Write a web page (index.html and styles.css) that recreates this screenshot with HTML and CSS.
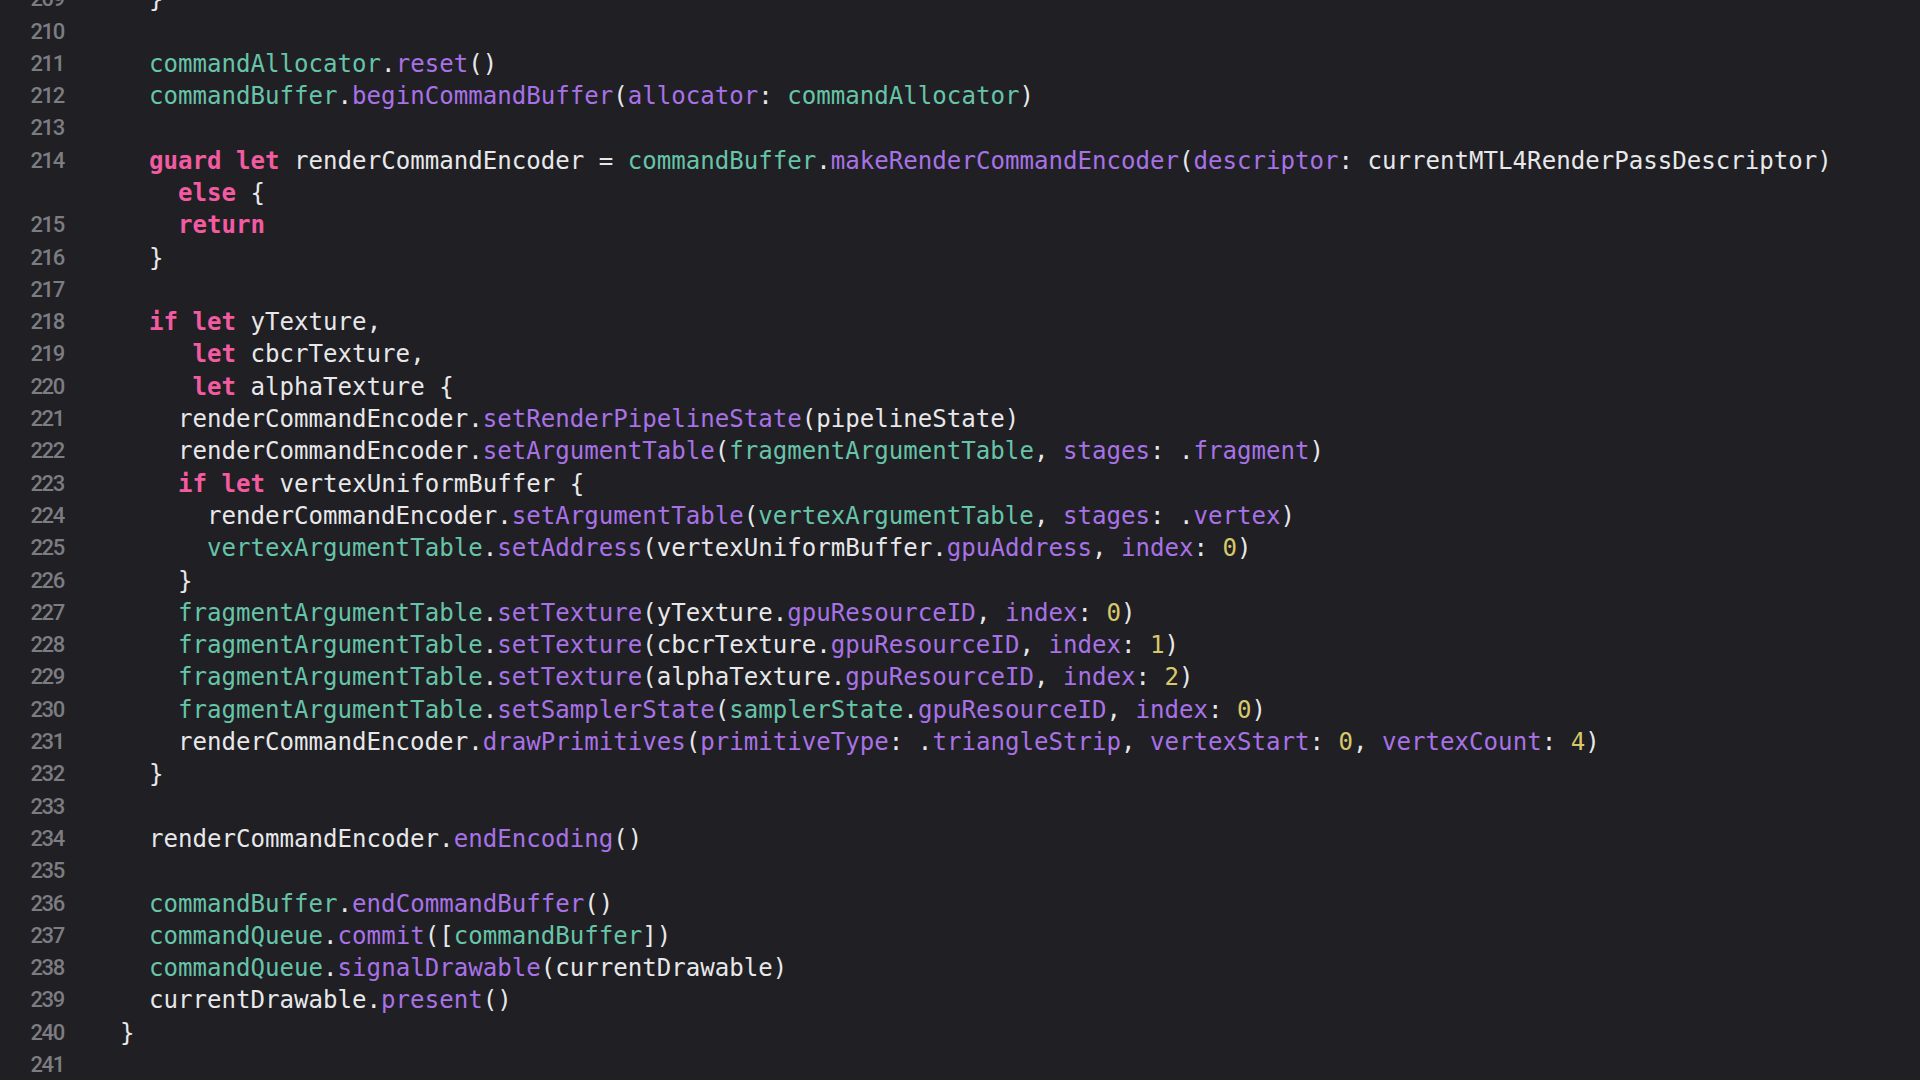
FILE: index.html
```html
<!DOCTYPE html>
<html>
<head>
<meta name="viewport" content="width=device-width, initial-scale=1">
<title>Renderer.swift</title>
<link rel="stylesheet" href="styles.css">
</head>
<body>
<!-- Source editor -->
<div class="editor">
   <div class="line"><span class="num">209</span><span class="code">  }</span></div>
   <div class="line"><span class="num">210</span><span class="code"></span></div>
   <div class="line"><span class="num">211</span><span class="code">  <span class="pj">commandAllocator</span>.<span class="fn">reset</span>()</span></div>
   <div class="line"><span class="num">212</span><span class="code">  <span class="pj">commandBuffer</span>.<span class="fn">beginCommandBuffer</span>(<span class="fn">allocator</span>: <span class="pj">commandAllocator</span>)</span></div>
   <div class="line"><span class="num">213</span><span class="code"></span></div>
   <div class="line"><span class="num">214</span><span class="code">  <span class="kw">guard</span> <span class="kw">let</span> renderCommandEncoder = <span class="pj">commandBuffer</span>.<span class="fn">makeRenderCommandEncoder</span>(<span class="fn">descriptor</span>: currentMTL4RenderPassDescriptor)</span></div>
   <div class="line"><span class="num"></span><span class="code">    <span class="kw">else</span> {</span></div>
   <div class="line"><span class="num">215</span><span class="code">    <span class="kw">return</span></span></div>
   <div class="line"><span class="num">216</span><span class="code">  }</span></div>
   <div class="line"><span class="num">217</span><span class="code"></span></div>
   <div class="line"><span class="num">218</span><span class="code">  <span class="kw">if</span> <span class="kw">let</span> yTexture,</span></div>
   <div class="line"><span class="num">219</span><span class="code">     <span class="kw">let</span> cbcrTexture,</span></div>
   <div class="line"><span class="num">220</span><span class="code">     <span class="kw">let</span> alphaTexture {</span></div>
   <div class="line"><span class="num">221</span><span class="code">    renderCommandEncoder.<span class="fn">setRenderPipelineState</span>(pipelineState)</span></div>
   <div class="line"><span class="num">222</span><span class="code">    renderCommandEncoder.<span class="fn">setArgumentTable</span>(<span class="pj">fragmentArgumentTable</span>, <span class="fn">stages</span>: .<span class="fn">fragment</span>)</span></div>
   <div class="line"><span class="num">223</span><span class="code">    <span class="kw">if</span> <span class="kw">let</span> vertexUniformBuffer {</span></div>
   <div class="line"><span class="num">224</span><span class="code">      renderCommandEncoder.<span class="fn">setArgumentTable</span>(<span class="pj">vertexArgumentTable</span>, <span class="fn">stages</span>: .<span class="fn">vertex</span>)</span></div>
   <div class="line"><span class="num">225</span><span class="code">      <span class="pj">vertexArgumentTable</span>.<span class="fn">setAddress</span>(vertexUniformBuffer.<span class="fn">gpuAddress</span>, <span class="fn">index</span>: <span class="nm">0</span>)</span></div>
   <div class="line"><span class="num">226</span><span class="code">    }</span></div>
   <div class="line"><span class="num">227</span><span class="code">    <span class="pj">fragmentArgumentTable</span>.<span class="fn">setTexture</span>(yTexture.<span class="fn">gpuResourceID</span>, <span class="fn">index</span>: <span class="nm">0</span>)</span></div>
   <div class="line"><span class="num">228</span><span class="code">    <span class="pj">fragmentArgumentTable</span>.<span class="fn">setTexture</span>(cbcrTexture.<span class="fn">gpuResourceID</span>, <span class="fn">index</span>: <span class="nm">1</span>)</span></div>
   <div class="line"><span class="num">229</span><span class="code">    <span class="pj">fragmentArgumentTable</span>.<span class="fn">setTexture</span>(alphaTexture.<span class="fn">gpuResourceID</span>, <span class="fn">index</span>: <span class="nm">2</span>)</span></div>
   <div class="line"><span class="num">230</span><span class="code">    <span class="pj">fragmentArgumentTable</span>.<span class="fn">setSamplerState</span>(<span class="pj">samplerState</span>.<span class="fn">gpuResourceID</span>, <span class="fn">index</span>: <span class="nm">0</span>)</span></div>
   <div class="line"><span class="num">231</span><span class="code">    renderCommandEncoder.<span class="fn">drawPrimitives</span>(<span class="fn">primitiveType</span>: .<span class="fn">triangleStrip</span>, <span class="fn">vertexStart</span>: <span class="nm">0</span>, <span class="fn">vertexCount</span>: <span class="nm">4</span>)</span></div>
   <div class="line"><span class="num">232</span><span class="code">  }</span></div>
   <div class="line"><span class="num">233</span><span class="code"></span></div>
   <div class="line"><span class="num">234</span><span class="code">  renderCommandEncoder.<span class="fn">endEncoding</span>()</span></div>
   <div class="line"><span class="num">235</span><span class="code"></span></div>
   <div class="line"><span class="num">236</span><span class="code">  <span class="pj">commandBuffer</span>.<span class="fn">endCommandBuffer</span>()</span></div>
   <div class="line"><span class="num">237</span><span class="code">  <span class="pj">commandQueue</span>.<span class="fn">commit</span>([<span class="pj">commandBuffer</span>])</span></div>
   <div class="line"><span class="num">238</span><span class="code">  <span class="pj">commandQueue</span>.<span class="fn">signalDrawable</span>(currentDrawable)</span></div>
   <div class="line"><span class="num">239</span><span class="code">  currentDrawable.<span class="fn">present</span>()</span></div>
   <div class="line"><span class="num">240</span><span class="code">}</span></div>
   <div class="line"><span class="num">241</span><span class="code"></span></div>
</div>
</body>
</html>
```

FILE: styles.css
```css
html,
body {
   margin: 0;
   padding: 0;
   height: 100%;
   overflow: hidden;
   background: #1f1f24;
}

.editor {
   margin-top: -16.8px;
}

.line {
   display: grid;
   grid-template-columns: 64px 1fr;
   column-gap: 56px;
   height: 32.3px;
   line-height: 32.3px;
}

.num {
   font-family: Roboto, "Liberation Sans", sans-serif;
   font-size: 22px;
   font-weight: 500;
   letter-spacing: -1.3px;
   color: #7c7c81;
   text-align: right;
}

.code {
   font-family: "DejaVu Sans Mono", "Liberation Mono", monospace;
   font-size: 24.1px;
   white-space: pre;
   color: #e8e8ea;
}

.kw {
   color: #f25ba0;
   font-weight: bold;
}

.pj {
   color: #67c4a8;
}

.fn {
   color: #a872e6;
}

.nm {
   color: #d8c86a;
}
```
